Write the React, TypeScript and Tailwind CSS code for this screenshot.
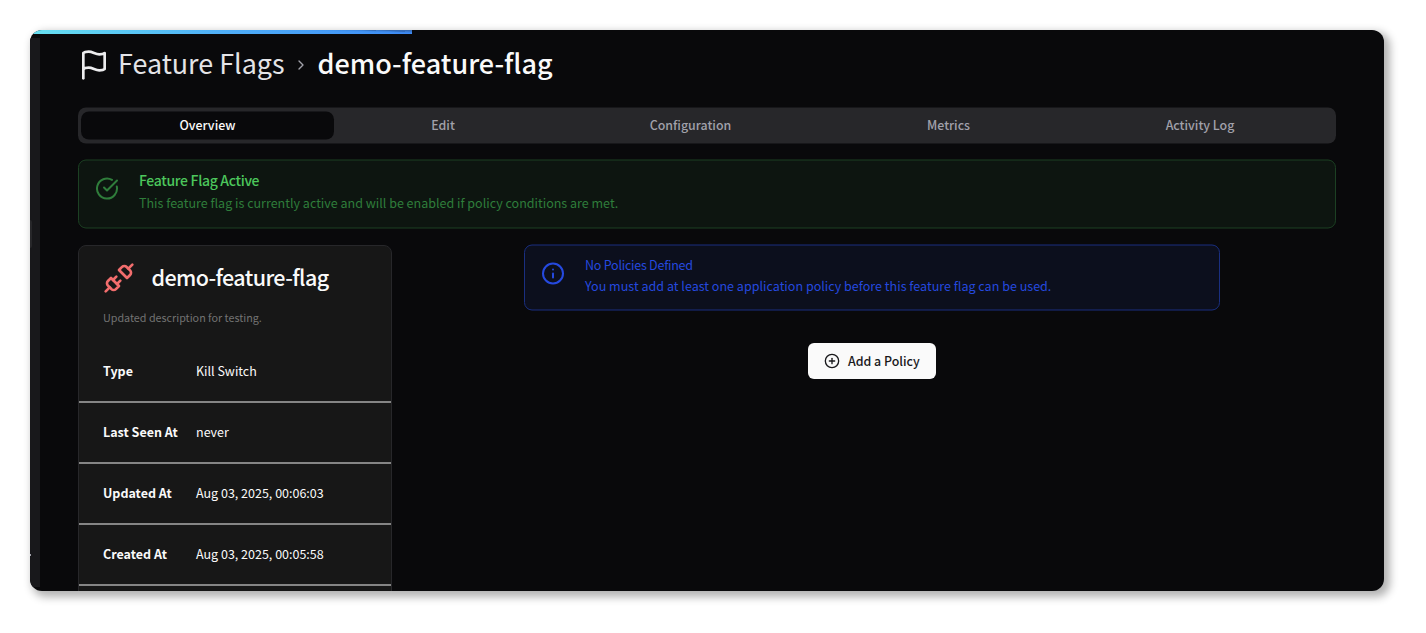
import { ChevronRight, CircleCheckBig, CirclePlus, Info, Unplug } from "lucide-react";

const tabs = [
  { label: "Overview", cell: "w-[253px] rounded-lg bg-[#09090b] text-[#fafafa]" },
  { label: "Edit", cell: "w-[218px] text-[#a1a1aa]" },
  { label: "Configuration", cell: "w-[277px] text-[#a1a1aa]" },
  { label: "Metrics", cell: "w-[239px] text-[#a1a1aa]" },
  { label: "Activity Log", cell: "w-[264px] text-[#a1a1aa]" },
];

const details = [
  { label: "Type", value: "Kill Switch" },
  { label: "Last Seen At", value: "never" },
  { label: "Updated At", value: "Aug 03, 2025, 00:06:03" },
  { label: "Created At", value: "Aug 03, 2025, 00:05:58" },
  { label: "", value: "" },
];

function FlagIcon() {
  return (
    <svg
      width="32"
      height="32"
      viewBox="0 0 24 24"
      fill="none"
      stroke="currentColor"
      strokeWidth="2"
      strokeLinecap="round"
      strokeLinejoin="round"
      className="shrink-0 text-[#ececee]"
    >
      <path d="M4 15s1-1 4-1 5 2 8 2 4-1 4-1V3s-1 1-4 1-5-2-8-2-4 1-4 1z" />
      <path d="M4 22v-7" />
    </svg>
  );
}

function LoadingBar() {
  return (
    <div className="relative h-1 w-[382px] shrink-0 overflow-hidden bg-linear-to-r from-[#67e0f0] via-[#4faff7] to-[#3f8cf7]">
      <span className="absolute -top-[4px] right-0 h-1 w-[100px] rotate-2 bg-[#2b4a78]/50 shadow-[0_0_2px_rgba(30,60,110,0.6)]" />
    </div>
  );
}

function Header() {
  return (
    <header className="flex h-[62px] items-center">
      <FlagIcon />
      <span className="ml-2 -mt-1 text-[26.9px] leading-8 font-normal text-[#e4e4e7]">Feature Flags</span>
      <ChevronRight size={16} className="ml-2 text-[#a1a1aa]" />
      <h1 className="-mt-1 ml-[9px] text-[27px] leading-8 font-medium text-[#fafafa]">demo-feature-flag</h1>
    </header>
  );
}

function Tabs() {
  return (
    <nav className="mt-3 flex h-9 -translate-y-[0.5px] rounded-lg bg-[#27272a] p-1 pl-[3px]">
      {tabs.map((t) => (
        <button key={t.label} className={`flex h-7 shrink-0 items-center justify-center pb-px text-[12.4px] font-medium ${t.cell}`}>
          {t.label}
        </button>
      ))}
    </nav>
  );
}

function FlagCard() {
  return (
    <section className="h-[360px] w-[314px] shrink-0 overflow-hidden rounded-t-lg border border-[#27272a] bg-[#171717]">
      <div className="flex h-[64px] items-center pl-6">
        <Unplug size={32} className="text-[#f26d6d]" />
        <h2 className="-mt-0.5 ml-[16.5px] text-[21.5px] leading-8 font-medium tracking-[-0.6px] text-[#fafafa]">demo-feature-flag</h2>
      </div>
      <p className="h-8 pt-px pl-6 text-[10.75px] leading-[14px] text-[#737373]">Updated description for testing.</p>
      {details.map((d) => (
        <div key={d.label} className="flex h-[61px] items-center border-b-2 border-[#858585] pl-6 text-[12.5px] text-[#fafafa]">
          <span className="w-[93px] font-bold">{d.label}</span>
          <span>{d.value}</span>
        </div>
      ))}
    </section>
  );
}

export default function App() {
  return (
    <div className="h-[633px] w-[1426px] overflow-hidden bg-white p-[30px] font-['Noto_Sans_CJK_SC','Noto_Sans',sans-serif]">
      <div className="flex h-[561px] w-[1354px] flex-col overflow-hidden rounded-xl bg-[#09090b] shadow-[4px_4px_8px_2px_rgba(0,0,0,0.3)]">
        <LoadingBar />
        <div className="flex h-[557px]">
          <aside className="mt-1 flex h-[549px] w-2.5 shrink-0 flex-col bg-[#18181b]">
            <span className="mt-[182px] h-[28px] w-0.5 rounded-r-sm bg-[#27272a]" />
            <span className="mt-[306px] h-0.5 w-px bg-[#a1a1aa]" />
          </aside>
          <main className="ml-[38px] w-[1258px] shrink-0">
            <Header />
            <Tabs />
            <section className="mt-4 flex h-[69px] -translate-y-[0.5px] rounded-lg border border-[#1c4023] bg-[#0d1510] pt-4 pl-4">
              <CircleCheckBig size={24} className="text-[#2f7d3b]" />
              <div className="-mt-1.5 ml-5">
                <h3 className="text-[14px] leading-[18px] font-medium tracking-[-0.32px] text-[#4cc75c]">Feature Flag Active</h3>
                <p className="mt-1 text-[12.53px] leading-5 text-[#2f7d3b]">This feature flag is currently active and will be enabled if policy conditions are met.</p>
              </div>
            </section>
            <div className="mt-4 flex">
              <FlagCard />
              <div className="ml-[132px] flex w-[696px] flex-col items-center">
                <section className="flex h-[66px] w-full -translate-y-[0.5px] rounded-lg border border-[#1a2f80] bg-[#0c0f1d] pt-4 pl-4">
                  <Info size={24} className="text-[#2549df]" />
                  <div className="-mt-[7px] ml-5 text-[12.55px] text-[#2549df]">
                    <h3 className="leading-5 tracking-[-0.26px]">No Policies Defined</h3>
                    <p className="leading-[22px]">You must add at least one application policy before this feature flag can be used.</p>
                  </div>
                </section>
                <button className="mt-8 flex h-9 w-32 items-center rounded-md bg-[#fafafa] pl-4 text-[12.4px] font-medium text-[#18181b]">
                  <CirclePlus size={16} />
                  <span className="ml-2">Add a Policy</span>
                </button>
              </div>
            </div>
          </main>
        </div>
      </div>
    </div>
  );
}
